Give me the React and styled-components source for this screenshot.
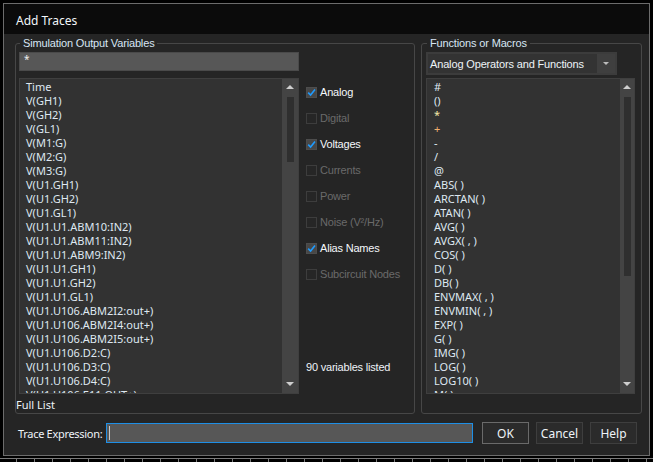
import React from 'react';
import styled, { createGlobalStyle } from 'styled-components';

const Global = createGlobalStyle`
html, body { margin: 0; padding: 0; background: #000; }
body { width: 653px; height: 462px; overflow: hidden; }
#root { padding: 3px 0 0 3px; }
`;

const Window = styled.div`
width: 645px;
height: 451px;
border: 1px solid #6c6c6c;
background: #252525;
display: flex;
flex-direction: column;
font-family: "Noto Sans", "Open Sans", sans-serif;
`;

const TitleBar = styled.div`
height: 30px;
background: #0b0b0b;
color: #f2f6fa;
font-size: 12px;
display: flex;
align-items: center;
padding: 3px 0 0 12px;
box-sizing: border-box;
`;

const Body = styled.div`
flex: 1;
display: flex;
flex-direction: column;
padding: 2px 7px 0 11px;
`;

const Groups = styled.div`
display: flex;
gap: 6px;
`;

const Group = styled.fieldset`
margin: 0;
width: ${p => p.$w}px;
height: 378px;
box-sizing: border-box;
border: 1px solid #474747;
border-radius: 3px;
padding: 2px ${p => p.$pr}px 0 ${p => p.$pl}px;
display: flex;
flex-direction: column;
min-width: 0;
`;

const Legend = styled.legend`
font-family: "Liberation Sans", Arial, sans-serif;
font-size: 11px;
letter-spacing: -0.15px;
line-height: 14px;
color: #d8e6f4;
padding: 0 3px;
margin-left: 1px;
white-space: nowrap;
`;

const Filter = styled.div`
width: 280px;
height: 19px;
background: #575757;
border: 1px solid #4a4a4a;
box-sizing: border-box;
color: #eee;
font-size: 10px;
line-height: 12px;
padding-left: 4px;
`;

const Row = styled.div`
display: flex;
gap: 7px;
margin-top: ${p => p.$mt}px;
`;

const ListBox = styled.div`
width: ${p => p.$w}px;
height: 316px;
flex-shrink: 0;
box-sizing: border-box;
border: 1px solid #3f3f3f;
background: #323232;
display: flex;
overflow: hidden;
`;

const Items = styled.div`
flex: 1;
padding: 1px 0 0 ${p => p.$pl}px;
overflow: hidden;
`;

const Item = styled.div`
font-size: 11px;
line-height: 14px;
height: 14px;
color: ${p => p.$c || '#dfe8f1'};
white-space: nowrap;
`;

const ScrollBar = styled.div`
width: ${p => p.$w}px;
background: #444;
display: flex;
flex-direction: column;
align-items: center;
`;

const Arrow = styled.div`
width: 0;
height: 0;
border-left: 4px solid transparent;
border-right: 4px solid transparent;
${p => p.$down ? 'border-top: 4px solid #cfcfcf;' : 'border-bottom: 4px solid #cfcfcf;'}
margin-top: ${p => p.$down ? 'auto' : '6px'};
margin-bottom: ${p => p.$down ? '7px' : '0'};
`;

const Thumb = styled.div`
width: 7px;
height: ${p => p.$h}px;
margin-top: 8px;
background: #2f2f2f;
`;

const Options = styled.div`
display: flex;
flex-direction: column;
padding-top: 1px;
`;

const Check = styled.div`
height: 26px;
display: flex;
align-items: center;
gap: 3px;
white-space: nowrap;
font-family: "Liberation Sans", Arial, sans-serif;
font-size: 11px;
letter-spacing: -0.2px;
color: ${p => p.$on ? '#f4f8fc' : '#6a6a6a'};
`;

const Box = styled.div`
width: 11px;
height: 11px;
flex-shrink: 0;
box-sizing: border-box;
border: 1px solid ${p => p.$on ? '#4d4d4d' : '#3d3d3d'};
background: ${p => p.$on ? '#474747' : '#262626'};
display: flex;
align-items: center;
justify-content: center;
`;

const Count = styled.div`
margin-top: auto;
margin-bottom: 21px;
white-space: nowrap;
font-family: "Liberation Sans", Arial, sans-serif;
font-size: 11px;
letter-spacing: -0.2px;
color: #eef3f8;
`;

const FullList = styled.div`
font-size: 11px;
color: #eef3f8;
margin: 3px 0 0 -3px;
`;

const Combo = styled.div`
width: 191px;
height: 23px;
box-sizing: border-box;
border: 2px solid #3c3c3c;
background: #333;
display: flex;
align-items: center;
`;

const ComboText = styled.div`
flex: 1;
white-space: nowrap;
overflow: hidden;
font-family: "Liberation Sans", Arial, sans-serif;
font-size: 11px;
letter-spacing: -0.15px;
color: #eef3f8;
padding-left: 2px;
`;

const ComboButton = styled.div`
width: 18px;
height: 100%;
background: #3f3f3f;
display: flex;
align-items: center;
justify-content: center;
`;

const SmallDown = styled.div`
border-left: 3px solid transparent;
border-right: 3px solid transparent;
border-top: 3px solid #bbb;
`;

const Bottom = styled.div`
display: flex;
align-items: center;
margin-top: 8px;
height: 22px;
padding-left: 3px;
`;

const ExprLabel = styled.div`
font-size: 11px;
letter-spacing: -0.3px;
color: #eef3f8;
width: 88px;
flex-shrink: 0;
white-space: nowrap;
`;

const ExprInput = styled.div`
width: 367px;
height: 20px;
flex-shrink: 0;
box-sizing: border-box;
border: 1px solid #1e8fe6;
background: #575757;
display: flex;
align-items: center;
padding-left: 2px;
`;

const Caret = styled.div`
width: 1px;
height: 14px;
background: #c8c8c8;
`;

const Buttons = styled.div`
display: flex;
gap: 7px;
margin-left: 9px;
`;

const Button = styled.div`
width: 47px;
height: 22px;
box-sizing: border-box;
border: 1px solid ${p => p.$def ? '#6a6a6a' : '#3e3e3e'};
background: #2b2b2b;
color: #eef3f8;
font-size: 12px;
display: flex;
align-items: center;
justify-content: center;
`;

const Ticks = styled.div`
width: 653px;
height: 6px;
margin-left: -3px;
background:
  linear-gradient(#7a7a7a, #7a7a7a) 0 2px / 100% 1px no-repeat,
  repeating-linear-gradient(90deg, transparent 0 16px, #7a7a7a 16px 17px, transparent 17px 18px) 0 2px / 100% 4px no-repeat;
`;

const vars = [
  'Time', 'V(GH1)', 'V(GH2)', 'V(GL1)', 'V(M1:G)', 'V(M2:G)', 'V(M3:G)',
  'V(U1.GH1)', 'V(U1.GH2)', 'V(U1.GL1)', 'V(U1.U1.ABM10:IN2)', 'V(U1.U1.ABM11:IN2)',
  'V(U1.U1.ABM9:IN2)', 'V(U1.U1.GH1)', 'V(U1.U1.GH2)', 'V(U1.U1.GL1)',
  'V(U1.U106.ABM2I2:out+)', 'V(U1.U106.ABM2I4:out+)', 'V(U1.U106.ABM2I5:out+)',
  'V(U1.U106.D2:C)', 'V(U1.U106.D3:C)', 'V(U1.U106.D4:C)', 'V(U1.U106.E11:OUT+)',
];

const funcs = [
  ['#'], ['()'], ['*', '#f3e6a8'], ['+', '#f0b070'], ['-'], ['/'], ['@'],
  ['ABS( )'], ['ARCTAN( )'], ['ATAN( )'], ['AVG( )'], ['AVGX( , )'], ['COS( )'],
  ['D( )'], ['DB( )'], ['ENVMAX( , )'], ['ENVMIN( , )'], ['EXP( )'], ['G( )'],
  ['IMG( )'], ['LOG( )'], ['LOG10( )'], ['M( )'],
];

const options = [
  ['Analog', true], ['Digital', false], ['Voltages', true], ['Currents', false],
  ['Power', false], ['Noise (V\u00b2/Hz)', false], ['Alias Names', true], ['Subcircuit Nodes', false],
];

const Tick = () => (
  <svg width="9" height="9" viewBox="0 0 9 9">
    <path d="M1.2 4.6 L3.6 7 L8 1.6" stroke="#1e9bff" strokeWidth="1.6" fill="none" />
  </svg>
);

export default function App() {
  return (
    <>
      <Global />
      <Window>
        <TitleBar>Add Traces</TitleBar>
        <Body>
          <Groups>
            <Group $w={400} $pl={3} $pr={4}>
              <Legend>Simulation Output Variables</Legend>
              <Filter>*</Filter>
              <Row $mt={7}>
                <ListBox $w={280}>
                  <Items $pl={6}>
                    {vars.map(v => <Item key={v}>{v}</Item>)}
                  </Items>
                  <ScrollBar $w={16}>
                    <Arrow />
                    <Thumb $h={65} />
                    <Arrow $down />
                  </ScrollBar>
                </ListBox>
                <Options>
                  {options.map(([label, on]) => (
                    <Check key={label} $on={on}>
                      <Box $on={on}>{on && <Tick />}</Box>
                      {label}
                    </Check>
                  ))}
                  <Count>90 variables listed</Count>
                </Options>
              </Row>
              <FullList>Full List</FullList>
            </Group>
            <Group $w={221} $pl={4} $pr={6}>
              <Legend>Functions or Macros</Legend>
              <Combo>
                <ComboText>Analog Operators and Functions</ComboText>
                <ComboButton><SmallDown /></ComboButton>
              </Combo>
              <Row $mt={3}>
                <ListBox $w={209}>
                  <Items $pl={7}>
                    {funcs.map(([f, c]) => <Item key={f} $c={c}>{f}</Item>)}
                  </Items>
                  <ScrollBar $w={14}>
                    <Arrow />
                    <Thumb $h={179} />
                    <Arrow $down />
                  </ScrollBar>
                </ListBox>
              </Row>
            </Group>
          </Groups>
          <Bottom>
            <ExprLabel>Trace Expression:</ExprLabel>
            <ExprInput><Caret /></ExprInput>
            <Buttons>
              <Button $def>OK</Button>
              <Button>Cancel</Button>
              <Button>Help</Button>
            </Buttons>
          </Bottom>
        </Body>
      </Window>
      <Ticks />
    </>
  );
}
